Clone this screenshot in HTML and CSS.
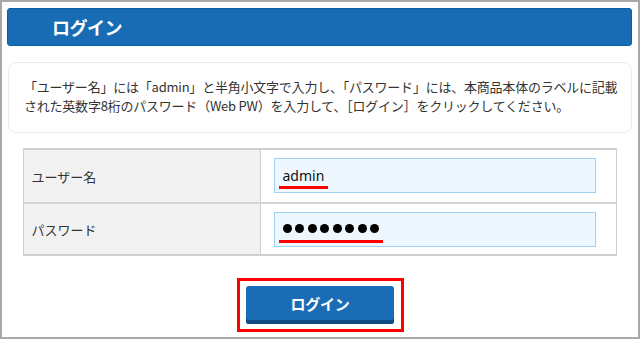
FILE: index.html
```html
<!DOCTYPE html>
<html lang="ja">
<head>
<meta charset="utf-8">
<link rel="stylesheet" href="styles.css">
</head>
<body>
<div class="frame">
  <div class="header"><h1 class="title">ログイン</h1></div>
  <div class="note">
    <p class="note-text">「ユーザー名」には「admin」と半角小文字で入力し、「パスワード」には、本商品本体のラベルに記載<br>された英数字8桁のパスワード（Web PW）を入力して、［ログイン］をクリックしてください。</p>
  </div>
  <div class="form">
    <div class="row">
      <div class="label">ユーザー名</div>
      <div class="cell"><div class="field"><span class="mark">admin</span></div></div>
    </div>
    <div class="row">
      <div class="label">パスワード</div>
      <div class="cell"><div class="field"><span class="mark dots"><i></i><i></i><i></i><i></i><i></i><i></i><i></i><i></i></span></div></div>
    </div>
  </div>
  <div class="actions">
    <div class="highlight"><div class="btn">ログイン</div></div>
  </div>
</div>
</body>
</html>
```
FILE: styles.css
```css
* { box-sizing: border-box; }
html, body { margin: 0; padding: 0; background: #fff; }
body { font-family: "Noto Sans CJK JP", "Noto Sans", sans-serif; color: #333; }
.frame {
  width: 640px; height: 339px;
  border: 2px solid #a8a8a8;
  padding: 6px 6px 0 5px;
  display: flex; flex-direction: column;
  overflow: hidden;
}
.header {
  height: 38px;
  flex: none;
  background: #186cb3;
  border: 1px solid #0f5ea3;
  border-radius: 3px;
  display: flex; align-items: center;
  padding-left: 44px;
}
.title {
  margin: 0; color: #fff;
  font-size: 18px; font-weight: bold; line-height: 1;
  letter-spacing: -0.5px;
}
.note {
  margin: 16px 0 0 1px;
  height: 71px;
  flex: none;
  border: 1px solid #ececec;
  border-radius: 8px;
  padding: 14px 0 0 15px;
}
.note-text {
  margin: 0; font-size: 13px; line-height: 19px; white-space: nowrap;
  letter-spacing: -0.22px; color: #333;
}
.form {
  width: 594px; margin: 15px auto 0;
  flex: none;
  border: 1px solid #cfcfcf;
  border-top-width: 2px;
  border-bottom-width: 2px;
}
.row { display: flex; height: 52px; }
.row + .row { border-top: 2px solid #d4d4d4; }
.label {
  width: 237px; background: #f2f2f2;
  border-right: 1px solid #cfcfcf;
  display: flex; align-items: center;
  padding-left: 8px; font-size: 13px; color: #333;
}
.cell { flex: 1; padding: 8px 20px 0 13px; }
.field {
  height: 35px; background: #eff7fe;
  border: 1px solid #9fcff3;
  display: flex; align-items: center;
  padding: 3px 0 0 4px;
}
.mark {
  border-bottom: 3px solid #f00;
  padding: 0 4px 0 4px;
  font-size: 14px; line-height: 20px; color: #111;
  font-family: "Noto Sans", "DejaVu Sans", sans-serif;
}
.dots { display: inline-flex; gap: 3.5px; align-items: center; height: 23px; padding-bottom: 2px; }
.dots i { width: 9px; height: 9px; border-radius: 50%; background: #000; display: block; }
.actions { display: flex; justify-content: center; margin-top: 22px; padding-left: 2px; flex: none; }
.highlight {
  width: 167px; height: 54px;
  border: 3px solid #f00;
  padding: 5px 0 0 6px;
}
.btn {
  width: 148px; height: 38px;
  background: #1a6db5;
  border-radius: 3px;
  box-shadow: inset 0 -4px 0 #0f4a80;
  color: #fff; font-weight: bold; font-size: 15px;
  display: flex; align-items: center; justify-content: center;
  padding-bottom: 3px;
  letter-spacing: -0.3px;
}
```
